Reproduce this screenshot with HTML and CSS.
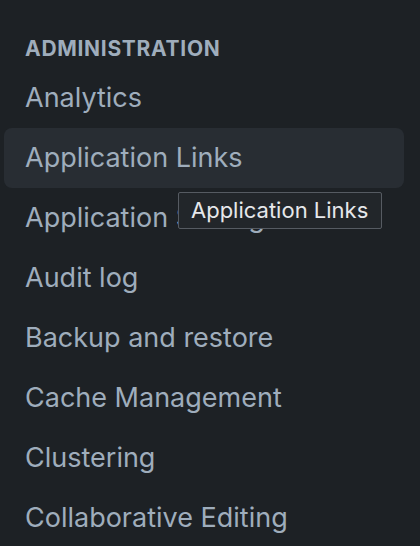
FILE: index.html
```html
<!DOCTYPE html>
<html>
<head>
<meta charset="utf-8">
<link rel="stylesheet" href="styles.css">
</head>
<body>
<nav class="sidebar">
  <div class="heading">Administration</div>
  <ul class="menu">
    <li class="item">Analytics</li>
    <li class="item hovered">Application Links</li>
    <li class="item">Application Settings</li>
    <li class="item">Audit log</li>
    <li class="item">Backup and restore</li>
    <li class="item">Cache Management</li>
    <li class="item">Clustering</li>
    <li class="item">Collaborative Editing</li>
  </ul>
  <div class="tooltip">Application Links</div>
</nav>
</body>
</html>
```

FILE: styles.css
```css
html, body {
  margin: 0;
  padding: 0;
  background: #1d2125;
  height: 100%;
  overflow: hidden;
}
.sidebar {
  position: relative;
  font-family: Inter, "Noto Sans", sans-serif;
  color: #9fadbc;
  padding-top: 37px;
}
.heading {
  font-size: 21px;
  line-height: 24px;
  font-weight: 700;
  text-transform: uppercase;
  letter-spacing: 0.7px;
  padding-left: 25px;
  margin-bottom: 7px;
}
.menu {
  list-style: none;
  margin: 0;
  padding: 0;
}
.item {
  margin: 0 16px 0 4px;
  padding-left: 21px;
  height: 60px;
  line-height: 60px;
  font-size: 27px;
  border-radius: 8px;
  white-space: nowrap;
}
.hovered {
  background: #282d33;
}
.tooltip {
  position: absolute;
  left: 178px;
  top: 192px;
  box-sizing: border-box;
  width: 204px;
  height: 37px;
  padding: 0 11px 0 12px;
  background: #22262a;
  border: 1px solid #565b62;
  border-radius: 2px;
  color: #e6e8eb;
  font-size: 22px;
  line-height: 35px;
  white-space: nowrap;
}
```
